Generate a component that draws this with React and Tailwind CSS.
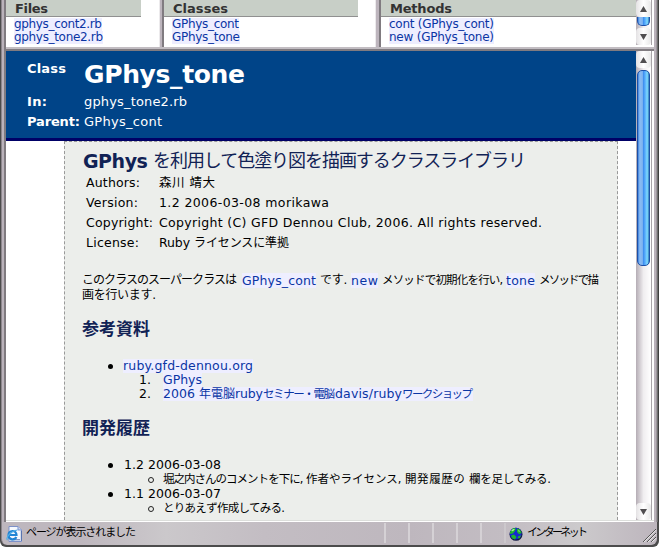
import React, { useLayoutEffect, useRef, useState } from "react";

// Text run spaced so that it fills the given width.
function Fit({ w, children, className = "" }) {
  const ref = useRef(null);
  const [gap, setGap] = useState(0);
  useLayoutEffect(() => {
    const count = Array.from(children).length;
    const natural = ref.current.getBoundingClientRect().width;
    if (count > 1) setGap((w - natural) / (count - 1));
  }, [w, children]);
  return (
    <span className={`block shrink-0 whitespace-pre ${className}`} style={{ width: w }}>
      <span ref={ref} style={{ letterSpacing: gap }}>{children}</span>
    </span>
  );
}

function Link({ w, children, className = "" }) {
  return <Fit w={w} className={`bg-[#eeeeff] text-[#0a35a4] ${className}`}>{children}</Fit>;
}

function Index({ title, titleW, pad, items, className, barClass }) {
  return (
    <div className={`h-[45px] overflow-hidden bg-white ${className}`}>
      <div className={`h-[17px] border-b border-[#909090] bg-[#c8cfc7] text-[13px] leading-[17px] font-bold text-[#333] ${pad} ${barClass}`}>
        <Fit w={titleW}>{title}</Fit>
      </div>
      <div className={`${pad} pt-px text-[12px] leading-[13px]`}>
        {items.map(([t, w]) => <Link key={t} w={w} className="-ml-px">{t}</Link>)}
      </div>
    </div>
  );
}

function Arrow({ down = false, className = "" }) {
  return (
    <div className={`flex h-[17px] w-full shrink-0 items-center justify-center rounded-sm bg-linear-to-r from-[#e4e2e4] via-white to-[#e8e8e8] ${className}`}>
      <svg width="7" height="6" viewBox="0 0 7 6" className="-ml-px"><path d={down ? "M0 0H7L3.5 6Z" : "M0 6H7L3.5 0Z"} fill="#504e50" /></svg>
    </div>
  );
}

const track = "flex w-4 shrink-0 flex-col border-r border-[#a8a4a8] bg-linear-to-r from-[#b5adb5] via-[#f0eef0] to-white";
const thumb = "border border-[#1c50a8] bg-[linear-gradient(90deg,#3c80dc_0%,#8abcf4_16%,#80b4f0_40%,#4090f0_50%,#58acfc_64%,#80dcff_84%,#3078b8_100%)]";

function Field({ label, lw, children, w }) {
  return (
    <div className="flex h-5 pl-1">
      <div className="w-[73px]"><Fit w={lw}>{label}</Fit></div>
      <Fit w={w}>{children}</Fit>
    </div>
  );
}

function Bullet() {
  return <i className="mt-[5px] mr-[11px] ml-[26px] block size-[5px] shrink-0 rounded-full bg-black" />;
}
function Circle() {
  return <i className="mt-[5px] mr-[9px] ml-[66px] block size-[6px] shrink-0 rounded-full border border-[#222]" />;
}

function PageIcon() {
  return (
    <svg width="16" height="16" viewBox="0 0 16 16">
      <path d="M3 .5H12L15.5 4V15.5H3Z" fill="#f5f9ff" stroke="#7d91c9" />
      <path d="M12 .5V4H15.5" fill="#c6d5f5" stroke="#7d91c9" />
      <path d="M14 13.8H4M15.3 5V15" stroke="#526fac" strokeWidth="1" />
      <path d="M3.5 9H10.5C10.5 3.5 2.5 3.8 2.5 9.3C2.5 14.4 9 14.3 10.3 11" fill="none" stroke="#2185d5" strokeWidth="2.2" />
      <path d="M1.5 14C-.8 11.5 5.5 4.5 11.5 4" fill="none" stroke="#4dafe8" strokeWidth="1.2" />
    </svg>
  );
}

function Globe() {
  return (
    <svg width="14" height="14" viewBox="0 0 14 14">
      <circle cx="7" cy="7.3" r="6.5" fill="#151c45" />
      <circle cx="6.7" cy="6.7" r="5.9" fill="#1528d2" />
      <path d="M1 5L4 1L7 1.5L6 4L4 6.5L1 7ZM8 1.5L11 2.5L12.7 6L10 7.2L8 5ZM2 8.5L5 7.5L7.5 10L6 12.5L3 11.2ZM9.5 9L12 8.5L10.5 11.5L8.5 11Z" fill="#20b52c" />
      <path d="M2 4L4 2H6L4 4.2ZM9 3L11 4L10 5Z" fill="#a4ee9a" />
    </svg>
  );
}

export default function App() {
  return (
    <div className="flex h-[547px] w-[659px] flex-col overflow-hidden rounded-b-md bg-[#4c4c4c] font-['DejaVu_Sans','Noto_Sans_CJK_JP',sans-serif] text-black">
      <div className="flex h-[522px]">
        <div className="w-[6px] shrink-0 bg-[linear-gradient(90deg,#4c4c4c_0_1px,#8c868c_1px_2px,#bab2ba_2px_4px,#807b80_4px_6px)]" />
        <div className="flex w-[648px] shrink-0 flex-col bg-white">
          <div className="flex h-[47px] bg-white">
            <Index title="Files" titleW={33} pad="pl-[9px]" barClass="w-[135px]" className="w-[153px]" items={[["gphys_cont2.rb", 88], ["gphys_tone2.rb", 89]]} />
            <div className="w-[5px] bg-[linear-gradient(90deg,#eceaec_0_1px,#bdb5bd_1px_3px,#807b80_3px_5px)]" />
            <Index title="Classes" titleW={55} pad="pl-[9px]" barClass="w-[194px]" className="w-[211px]" items={[["GPhys_cont", 67], ["GPhys_tone", 68]]} />
            <div className="w-[6px] bg-[linear-gradient(90deg,#eceaec_0_1px,#bdb5bd_1px_4px,#807b80_4px_6px)]" />
            <Index title="Methods" titleW={62} pad="pl-[9px]" barClass="w-[255px]" className="w-[255px]" items={[["cont (GPhys_cont)", 105], ["new (GPhys_tone)", 105]]} />
            <div className={`h-[45px] ${track}`}>
              <Arrow />
              <div className={`mx-px h-[9px] rounded-b-[5px] border-t-0 ${thumb}`} />
              <div className="h-[2px]" />
              <Arrow down />
            </div>
          </div>
          <div className="h-[4px] shrink-0 bg-[linear-gradient(#c2bdc2_0_2px,#807b80_2px_4px)]" />
          <div className="flex h-[469px] shrink-0">
            <div className="flex h-[469px] w-[630px] shrink-0 flex-col overflow-hidden bg-white">
              <div className="h-[90px] shrink-0 border-b-[3px] border-[#000066] bg-[#004488] pl-[21px] text-[13px] text-white">
                <div className="flex h-[40px]">
                  <div className="w-[57px] pt-[8px] leading-5 font-bold"><Fit w={39}>Class</Fit></div>
                  <Fit w={161} className="pt-[9px] text-[25px] leading-[30px] font-bold">GPhys_tone</Fit>
                </div>
                <div className="flex h-5 pt-px leading-5">
                  <div className="w-[57px] font-bold"><Fit w={20}>In:</Fit></div><Fit w={103}>gphys_tone2.rb</Fit>
                </div>
                <div className="flex h-5 pt-px leading-5">
                  <div className="w-[57px] font-bold"><Fit w={53}>Parent:</Fit></div><Fit w={78}>GPhys_cont</Fit>
                </div>
              </div>
              <div className="ml-[58px] h-[379px] w-[554px] shrink-0 border border-b-0 border-dashed border-[#999] bg-[#eceeeb] pt-[8px] pl-[17px] text-[12.5px]">
                <h1 className="flex h-[22px] text-[18px] leading-[22px] text-[#112255]">
                  <Fit w={71} className="pl-px text-[19px] font-bold">GPhys </Fit>
                  <Fit w={373}>を利用して色塗り図を描画するクラスライブラリ</Fit>
                </h1>
                <div className="mt-px text-[12.5px] leading-5">
                  <Field label="Authors:" lw={54} w={56}>森川 靖大</Field>
                  <Field label="Version:" lw={52} w={170}>1.2 2006-03-08 morikawa</Field>
                  <Field label="Copyright:" lw={67} w={383}>Copyright (C) GFD Dennou Club, 2006. All rights reserved.</Field>
                  <div className="flex h-5 pl-1">
                    <div className="w-[73px]"><Fit w={53}>License:</Fit></div>
                    <Fit w={35}>Ruby </Fit><Fit w={95} className="text-[12px]">ライセンスに準拠</Fit>
                  </div>
                </div>
                <div className="mt-5 leading-[15px]">
                  <div className="flex text-[12px]">
                    <Fit w={155} className="mr-[5px]">このクラスのスーパークラスは</Fit>
                    <Link w={74} className="mr-[4px] text-[12.5px]">GPhys_cont</Link>
                    <Fit w={31}>です. </Fit>
                    <Link w={27} className="mr-[4px] text-[12.5px]">new</Link>
                    <Fit w={124} className="text-[11.5px]">メソッドで初期化を行い, </Fit>
                    <Link w={29} className="mr-[4px] text-[12.5px]">tone</Link>
                    <Fit w={60} className="text-[11.5px]">メソッドで描</Fit>
                  </div>
                  <Fit w={74} className="text-[12px]">画を行います.</Fit>
                </div>
                <h2 className="mt-[15px] h-5 pt-px text-[17px] leading-5 font-bold text-[#112255]"><Fit w={68}>参考資料</Fit></h2>
                <div className="mt-[21px] leading-[14px]">
                  <div className="flex"><Bullet /><Link w={130} className="-ml-px">ruby.gfd-dennou.org</Link></div>
                  <div className="flex pl-[57px]"><Fit w={12} className="mr-3">1.</Fit><Link w={39}>GPhys</Link></div>
                  <div className="flex pl-[57px]">
                    <Fit w={12} className="mr-3">2.</Fit>
                    <Link w={36}>2006 </Link><Link w={36} className="text-[12px]">年電脳</Link><Link w={28}>ruby</Link><Link w={72} className="text-[11.5px]">セミナー・電脳</Link><Link w={67}>davis/ruby</Link><Link w={71} className="text-[11.5px]">ワークショップ</Link>
                  </div>
                </div>
                <h2 className="mt-4 h-5 pt-px text-[17px] leading-5 font-bold text-[#112255]"><Fit w={68}>開発履歴</Fit></h2>
                <div className="mt-[21px] leading-[14px]">
                  <div className="flex h-[14px]"><Bullet /><Fit w={97}>1.2 2006-03-08</Fit></div>
                  <div className="flex h-[15px] text-[11.5px]">
                    <Circle /><Fit w={143}>堀之内さんのコメントを下に, </Fit><Fit w={99}>作者やライセンス, </Fit><Fit w={64}>開発履歴の </Fit><Fit w={82}>欄を足してみる.</Fit>
                  </div>
                  <div className="flex h-[14px]"><Bullet /><Fit w={97}>1.1 2006-03-07</Fit></div>
                  <div className="flex h-[15px] text-[11.5px]"><Circle /><Fit w={122}>とりあえず作成してみる.</Fit></div>
                </div>
              </div>
            </div>
            <div className={`h-[469px] ${track}`}>
              <Arrow />
              <div className={`mx-px mt-[2px] h-[196px] rounded-[5px] ${thumb}`} />
              <div className="flex-1" />
              <Arrow down />
            </div>
          </div>
          <div className="h-[2px] shrink-0 bg-[linear-gradient(#dcdedb_0_1px,#ffffff_1px_2px)]" />
        </div>
        <div className="w-[5px] shrink-0 bg-[linear-gradient(90deg,#bab2ba_0_2px,#9c969c_2px_3px,#707070_3px_4px,#404040_4px_5px)]" />
      </div>
      <div className="mr-[2px] ml-px flex h-[23px] shrink-0 rounded-b-md border-l border-[#8c868c] bg-[linear-gradient(90deg,#beb7be_0%,#beb7be_12%,#cbc8cb_25%,#c3bdc3_40%,#beb7be_62%,#c3bdc3_78%,#cccacc_88%,#bdb5bd_100%)] pl-[4px] text-[11px] leading-[22px]">
        <div className="w-[20px] pt-[4px]"><PageIcon /></div>
        <div className="w-[358px]"><Fit w={110}>ページが表示されました</Fit></div>
        {[0, 1, 2, 3, 4].map((n) => <div key={n} className="mt-px h-[20px] w-6 border-l-2 border-[#d5d1d5]" />)}
        <div className="mt-px flex h-[20px] w-[117px] border-l-2 border-[#ccc8cc] pl-[3px]">
          <div className="w-[18px] pt-[4px]"><Globe /></div>
          <Fit w={61} className="-mt-px">インターネット</Fit>
        </div>
        <div className="ml-auto flex items-end pb-[2px]">
          <svg width="15" height="15" viewBox="0 0 15 15" fill="none">
            <path d="M1 14L14 1M5 14L14 5M9 14L14 9" stroke="#555" />
            <path d="M2.2 14L14 2.2M6.2 14L14 6.2M10.2 14L14 10.2" stroke="#eee" />
          </svg>
        </div>
      </div>
    </div>
  );
}
